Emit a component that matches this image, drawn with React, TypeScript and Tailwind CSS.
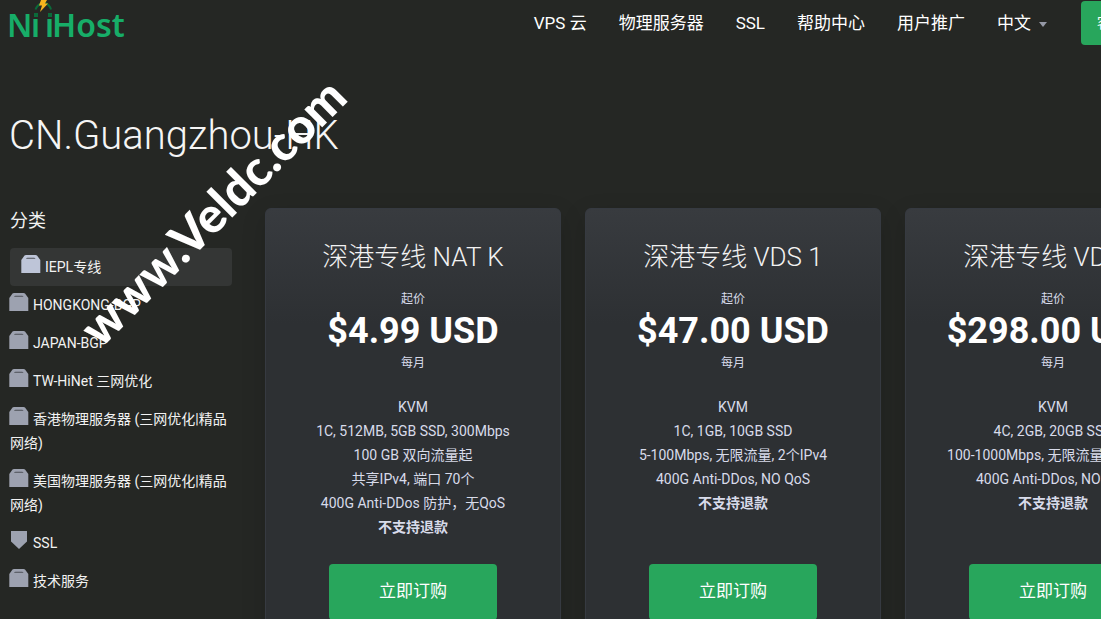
import { clsx } from 'clsx';

interface Category {
  label: string;
  icon: 'box' | 'shield';
  active?: boolean;
}

interface Plan {
  name: string;
  price: string;
  features: string[];
}

const navItems = ['VPS 云', '物理服务器', 'SSL', '帮助中心', '用户推广'];

const categories: Category[] = [
  { label: 'IEPL专线', icon: 'box', active: true },
  { label: 'HONGKONG-BGP', icon: 'box' },
  { label: 'JAPAN-BGP', icon: 'box' },
  { label: 'TW-HiNet 三网优化', icon: 'box' },
  { label: '香港物理服务器 (三网优化|精品网络)', icon: 'box' },
  { label: '美国物理服务器 (三网优化|精品网络)', icon: 'box' },
  { label: 'SSL', icon: 'shield' },
  { label: '技术服务', icon: 'box' },
];

const plans: Plan[] = [
  {
    name: '深港专线 NAT K',
    price: '$4.99 USD',
    features: ['KVM', '1C, 512MB, 5GB SSD, 300Mbps', '100 GB 双向流量起', '共享IPv4, 端口 70个', '400G Anti-DDos 防护，无QoS'],
  },
  {
    name: '深港专线 VDS 1',
    price: '$47.00 USD',
    features: ['KVM', '1C, 1GB, 10GB SSD', '5-100Mbps, 无限流量, 2个IPv4', '400G Anti-DDos, NO QoS'],
  },
  {
    name: '深港专线 VDS 2',
    price: '$298.00 USD',
    features: ['KVM', '4C, 2GB, 20GB SSD', '100-1000Mbps, 无限流量, 2个IPv4', '400G Anti-DDos, NO QoS'],
  },
];

function Logo() {
  return (
    <svg
      width="118"
      height="44"
      viewBox="0 0 118 44"
      role="img"
      aria-label="NiiHost"
      className="shrink-0 overflow-visible font-['Noto_Sans'] text-[32px] font-semibold"
    >
      <g fill="#17ad68">
        <text x="-3" y="37">N</text>
        <text x="21" y="37">ı</text>
        <text x="35" y="37">ı</text>
        <text x="42" y="37">Host</text>
      </g>
      <g fill="#0b6b3a">
        <rect x="24" y="13" width="4" height="4" />
        <rect x="38" y="13" width="4" height="4" />
      </g>
      <path d="M25.500 9.500Q27 5.500 31 3.500M35 3Q39.500 4.500 41 9.500" fill="none" stroke="#0b6b3a" strokeWidth="2" />
      <path d="M31 0h6l-2 3.500h3L30 12l2-6.500h-3z" fill="#f7b51e" />
    </svg>
  );
}

function CategoryIcon({ icon, active }: { icon: Category['icon']; active?: boolean }) {
  return (
    <svg
      width="20"
      height="20"
      viewBox="0 0 20 20"
      aria-hidden="true"
      className={clsx(
        '-mt-2 mr-1 -ml-px inline-block align-[-2px]',
        active ? 'text-[#bec5d8]' : 'text-[#9da2b0]',
      )}
    >
      {icon === 'box' ? (
        <>
          <path d="M0.300 6 3.500 1.500Q4 1 5 1h9.500q1 0 1.500 0.500l3.300 4.500V19H0.300z" fill="currentColor" />
          <path d="M5 4.700q0.500-1 1.500-1h6.500q1 0 1.500 1z" fill="#4b4e55" />
        </>
      ) : (
        <path d="M2 1h16v10.500L10 19l-8-7.500z" fill="currentColor" />
      )}
    </svg>
  );
}

function PlanCard({ plan }: { plan: Plan }) {
  return (
    <article className="flex min-h-[460px] flex-col items-center rounded-md border border-[#363a41] bg-[#2d3033] bg-linear-to-b from-[#383b3f] to-[#2d3033] to-25% px-4 pt-8 pb-10 text-center shadow-[0_8px_24px_rgba(0,0,0,0.15)]">
      <h2 className="text-[26px] leading-8 font-light text-[#f2f2f2]">{plan.name}</h2>
      <p className="mt-[18px] text-xs">起价</p>
      <p className="text-4xl leading-12 font-bold text-white">{plan.price}</p>
      <p className="text-xs">每月</p>
      <ul className="mt-6 min-h-36 text-sm leading-6">
        {plan.features.map((feature) => (
          <li key={feature}>{feature}</li>
        ))}
        <li className="font-bold">不支持退款</li>
      </ul>
      <button
        type="button"
        className="mt-[25px] h-14 w-[168px] rounded-sm bg-[#28a65c] text-[17px] text-white hover:bg-[#23934f]"
      >
        立即订购
      </button>
    </article>
  );
}

export default function App() {
  return (
    <div className="h-screen w-full overflow-hidden bg-[#252724] font-['Roboto','Noto_Sans_CJK_SC',sans-serif] text-[#d8dbea]">
      <div className="min-w-[1201px] pl-[10px]">
        <header className="flex items-start justify-between pr-8">
          <a href="#home">
            <Logo />
          </a>
          <nav aria-label="主导航" className="mt-px flex h-11 items-center gap-8 text-[17px] text-white">
            {navItems.map((item) => (
              <a key={item} href="#nav" className="pt-0.5 whitespace-nowrap">
                {item}
              </a>
            ))}
            <button type="button" className="mr-0.5 flex items-center gap-2 pt-0.5">
              中文
              <svg width="8" height="5" viewBox="0 0 8 5" aria-hidden="true">
                <path d="M0 0h8L4 5z" fill="#9599a6" />
              </svg>
            </button>
            <a href="#client" className="flex h-11 items-center rounded-sm bg-[#28a65c] px-4 text-sm">
              客户中心
            </a>
          </nav>
        </header>

        <h1 className="mt-[67px] -ml-px text-[40px] leading-12 font-light text-[#f5f5f5]">CN.Guangzhou-HK</h1>

        <main className="mt-12 flex items-start gap-[33px]">
          <aside className="w-[222px] shrink-0">
            <h2 className="text-lg leading-[26px] text-[#f2f2f2]">分类</h2>
            <ul className="mt-[14px] text-sm leading-6 text-[#f2f2f2]">
              {categories.map((category) => (
                <li key={category.label}>
                  <a
                    href="#category"
                    aria-current={category.active ? 'page' : undefined}
                    className={clsx('block rounded-sm py-[7px]', category.active && 'bg-[#343635] px-3')}
                  >
                    <CategoryIcon icon={category.icon} active={category.active} />
                    {category.label}
                  </a>
                </li>
              ))}
            </ul>
          </aside>

          <section aria-label="产品" className="grid grow grid-cols-3 gap-6">
            {plans.map((plan) => (
              <PlanCard key={plan.name} plan={plan} />
            ))}
          </section>
        </main>
      </div>

      <div className="pointer-events-none absolute top-[187px] left-[36px] origin-center -rotate-45 font-['Lato'] text-[49px] leading-12 font-black whitespace-nowrap text-white">
        www.Veldc.com
      </div>
    </div>
  );
}
